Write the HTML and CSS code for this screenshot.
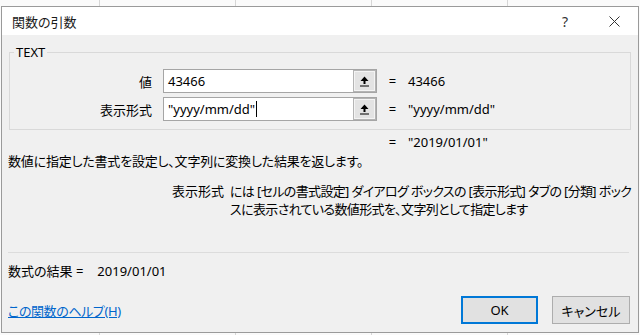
FILE: index.html
```html
<!DOCTYPE html>
<html lang="ja">
<head>
    <meta charset="UTF-8">
    <meta name="viewport" content="width=device-width, initial-scale=1.0">
    <title>関数の引数</title>
    <link rel="stylesheet" href="styles.css">
</head>
<body>
    <div class="dialog">
        <div class="titlebar">
            <span class="title">関数の引数</span>
            <span class="help">?</span>
            <span class="close">
                <svg width="11" height="11" viewBox="0 0 11 11"><path d="M0.5 0.5 L10.5 10.5 M10.5 0.5 L0.5 10.5" stroke="#333" stroke-width="1" fill="none"/></svg>
            </span>
        </div>

        <div class="content">
            <fieldset class="args">
                <legend>TEXT</legend>
                <div class="arg-grid">
                    <label class="arg-label">値</label>
                    <div class="field">
                        <div class="input">43466</div>
                        <button class="ref">
                            <svg width="9" height="11" viewBox="0 0 9 11"><path d="M4.5 0.5 L0.5 5 H3.5 V8 H5.5 V5 H8.5 Z" fill="#000"/><rect x="0" y="9.5" width="9" height="1" fill="#000"/></svg>
                        </button>
                    </div>
                    <span class="eq">=</span>
                    <span class="val">43466</span>

                    <label class="arg-label">表示形式</label>
                    <div class="field">
                        <div class="input">"yyyy/mm/dd"<span class="caret"></span></div>
                        <button class="ref">
                            <svg width="9" height="11" viewBox="0 0 9 11"><path d="M4.5 0.5 L0.5 5 H3.5 V8 H5.5 V5 H8.5 Z" fill="#000"/><rect x="0" y="9.5" width="9" height="1" fill="#000"/></svg>
                        </button>
                    </div>
                    <span class="eq">=</span>
                    <span class="val">"yyyy/mm/dd"</span>
                </div>
            </fieldset>

            <div class="result">
                <span class="eq">=</span>
                <span class="val">"2019/01/01"</span>
            </div>

            <p class="summary">数値に指定した書式を設定し、文字列に変換した結果を返します。</p>

            <div class="arg-help">
                <span class="arg-name">表示形式</span>
                <p class="arg-text">には [セルの書式設定] ダイアログ ボックスの [表示形式] タブの [分類] ボックスに表示されている数値形式を、文字列として指定します</p>
            </div>

            <hr class="sep">

            <div class="formula">数式の結果 =<span class="formula-val">2019/01/01</span></div>

            <div class="footer">
                <a href="#" class="help-link">この関数のヘルプ(H)</a>
                <button class="btn default">OK</button>
                <button class="btn">キャンセル</button>
            </div>
        </div>
    </div>
</body>
</html>
```

FILE: styles.css
```css
body {
    margin: 0;
    height: 335px;
    overflow: hidden;
    font-family: "Noto Sans", "Noto Sans CJK JP", sans-serif;
    font-size: 13px;
    font-feature-settings: "palt";
    color: #000;
    background: #fafafa repeating-linear-gradient(90deg, transparent 0 99px, #d6d6d6 99px 100px, transparent 100px 136px);
}

.dialog {
    margin: 6px 0 0 1px;
    width: 638px;
    height: 327px;
    box-sizing: border-box;
    border: 1px solid #9a9a9a;
    background-color: #f0f0f0;
    display: flex;
    flex-direction: column;
}

.titlebar {
    height: 28px;
    background-color: #fff;
    display: flex;
    align-items: center;
    padding: 0 1px 0 10px;
}

.title {
    flex: 1;
    font-size: 13px;
    color: #1a1a1a;
}

.help {
    width: 46px;
    margin-right: 3px;
    text-align: center;
    font-size: 14px;
    color: #333;
}

.close {
    width: 46px;
    height: 28px;
    display: flex;
    align-items: center;
    justify-content: center;
}

.content {
    flex: 1;
    padding: 0 7px 8px;
    display: flex;
    flex-direction: column;
}

.args {
    margin: 9px 0 0;
    padding: 9px 4px 8px;
    border: 1px solid #d9d9d9;
    min-width: 0;
}

.args legend {
    padding: 0 2px;
    line-height: 16px;
}

.arg-grid {
    display: grid;
    grid-template-columns: 138px 214px 9px 1fr;
    grid-auto-rows: 24px;
    column-gap: 11px;
    row-gap: 4px;
    align-items: center;
}

.arg-label {
    text-align: right;
}

.field {
    display: flex;
    height: 24px;
    box-sizing: border-box;
    border: 1px solid #a5a5a5;
    background-color: #fff;
}

.input {
    flex: 1;
    padding-left: 4px;
    line-height: 22px;
    display: flex;
    align-items: center;
}

.caret {
    display: inline-block;
    width: 1px;
    height: 16px;
    margin-left: 1px;
    background-color: #000;
}

.ref {
    width: 23px;
    height: 22px;
    margin: 0;
    padding: 0;
    border: 1px solid #b4b4b4;
    box-shadow: inset 0 0 0 1px #f4f4f4;
    background-color: #e3e3e3;
    display: flex;
    align-items: center;
    justify-content: center;
}

.eq {
    width: 9px;
    text-align: center;
}

.result {
    margin: 4px 0 0 379px;
    display: flex;
    gap: 11px;
    line-height: 16px;
}

.summary {
    margin: 3px 0 0 -1px;
    line-height: 16px;
    letter-spacing: -0.2px;
}

.arg-help {
    margin: 13px -6px 0 163px;
    display: flex;
    line-height: 18px;
}

.arg-name {
    width: 58px;
    flex-shrink: 0;
}

.arg-text {
    margin: 0;
    word-break: break-all;
    letter-spacing: -0.65px;
}

.sep {
    margin: auto 2px 9px -1px;
    border: none;
    border-top: 1px solid #dcdcdc;
}

.formula {
    margin-left: -1px;
    line-height: 18px;
}

.formula-val {
    margin-left: 14px;
}

.footer {
    margin-top: 16px;
    display: flex;
    align-items: center;
    gap: 14px;
}

.help-link {
    margin: 0 auto 0 -1px;
    color: #0066cc;
    letter-spacing: -0.4px;
}

.btn {
    width: 78px;
    height: 28px;
    margin-right: 1px;
    border: 1px solid #adadad;
    background-color: #e1e1e1;
    font-family: inherit;
    font-size: 13px;
    font-feature-settings: "palt";
}

.btn.default {
    width: 77px;
    margin-right: 0;
    border: 2px solid #0078d7;
}
```
